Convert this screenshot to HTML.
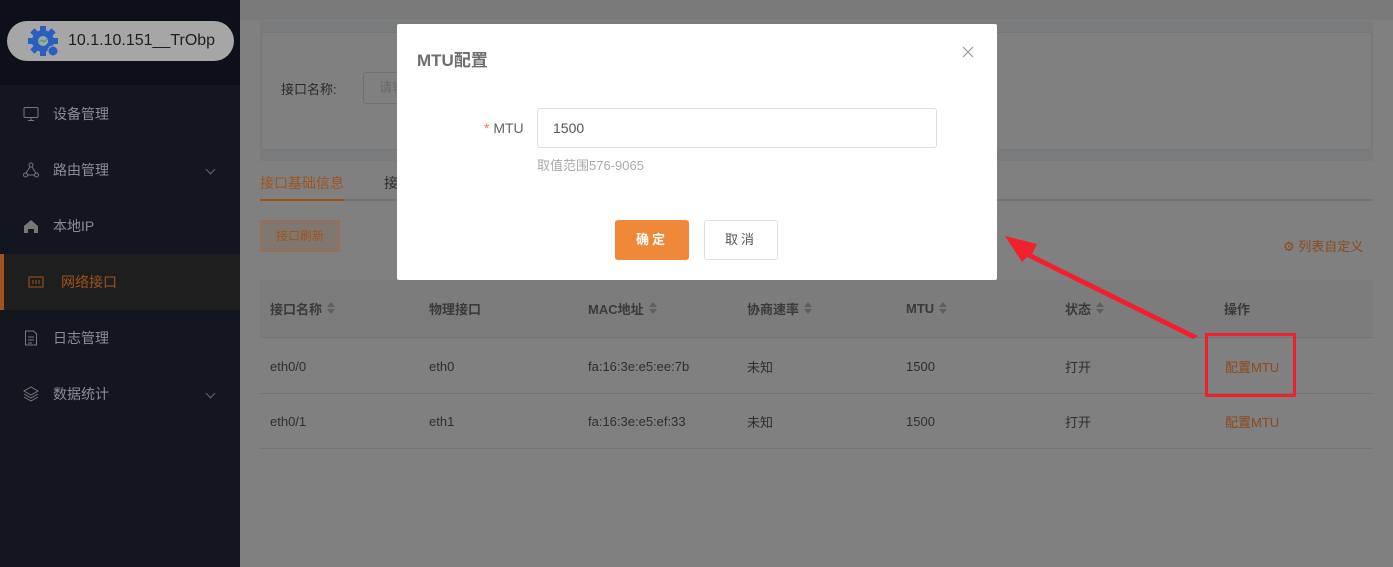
<!DOCTYPE html>
<html><head><meta charset="utf-8">
<style>
*{box-sizing:border-box;margin:0;padding:0}
body{width:1393px;height:567px;overflow:hidden;position:relative;background:#808080;font-family:"Liberation Sans","Noto Sans CJK SC",sans-serif;font-size:14px;color:#2a2a2a}
.abs{position:absolute}
.side{left:0;top:0;width:240px;height:567px;background:#12161f}
.top{left:0;top:0;width:240px;height:85px;background:#0d1018}
.pill{left:7px;top:21px;width:227px;height:40px;border-radius:20px;background:#a6a6a6;color:#1e1e1e;font-size:16px;line-height:40px;padding-left:61px}
.mi{left:0;width:240px;height:56px;line-height:56px;color:#8a8d93;font-size:14px;padding-left:53px}
.mi svg{position:absolute;left:23px;top:20px}
.act{background:#1e1e1e;color:#a0521c;border-left:4px solid #a0521c;padding-left:53px}
.chev{position:absolute;left:207px;top:24px;width:7px;height:7px;border-right:1px solid #666;border-bottom:1px solid #666;transform:rotate(45deg)}
.th{font-weight:bold;color:#3a3a3a;font-size:13px;height:20px;display:flex;align-items:center;white-space:nowrap}
.sort{display:inline-block;margin-left:5px;width:8px;height:12px;position:relative}
.sort:before{content:"";position:absolute;top:0;left:0;border:4px solid transparent;border-bottom:5px solid #5e5e5e;border-top:0}
.sort:after{content:"";position:absolute;bottom:0;left:0;border:4px solid transparent;border-top:5px solid #5e5e5e;border-bottom:0}
.td{font-size:13px;color:#2e2e2e;height:20px;display:flex;align-items:center;white-space:nowrap}
.or{color:#8a4a1c}
.modal{left:397px;top:24px;width:600px;height:256px;background:#fff;border-radius:2px}
</style></head><body>
<div class="abs side"></div>
<div class="abs top"></div>
<div class="abs pill">10.1.10.151__TrObp</div>
<svg class="abs" style="left:28px;top:26px" width="32" height="32" viewBox="0 0 32 32">
<g fill="#2a5fc0"><circle cx="15" cy="15" r="11"/>
<g transform="translate(15 15)"><rect x="-3" y="-15" width="6" height="7"/><rect x="-3" y="8" width="6" height="7"/><rect x="-15" y="-3" width="7" height="6"/><rect x="8" y="-3" width="7" height="6"/>
<rect x="-3" y="-15" width="6" height="7" transform="rotate(45)"/><rect x="-3" y="-15" width="6" height="7" transform="rotate(135)"/><rect x="-3" y="-15" width="6" height="7" transform="rotate(225)"/><rect x="-3" y="-15" width="6" height="7" transform="rotate(315)"/></g></g>
<circle cx="15" cy="15" r="5" fill="#a6a6a6"/><path d="M11 16l3-2 2 2 3-3" stroke="#2a6" fill="none"/>
<circle cx="25" cy="25" r="5" fill="#2a5fc0" stroke="#a6a6a6"/></svg>

<div class="abs mi" style="top:86px"><svg width="16" height="16" viewBox="0 0 16 16" fill="none" stroke="#777"><rect x="1" y="1.5" width="14" height="10" rx="1"/><path d="M5 14.5h6M8 11.5v3"/></svg>设备管理</div>
<div class="abs mi" style="top:142px"><svg width="16" height="16" viewBox="0 0 16 16" fill="none" stroke="#777"><circle cx="8" cy="3" r="2"/><circle cx="2.5" cy="13" r="2"/><circle cx="13.5" cy="13" r="2"/><path d="M7 5l-4 6M9 5l4 6M4.5 13h7"/></svg>路由管理<span class="chev"></span></div>
<div class="abs mi" style="top:198px"><svg width="16" height="16" viewBox="0 0 16 16"><path d="M1 8L8 2l7 6v7h-4v-4H5v4H1z" fill="#777"/></svg>本地IP</div>
<div class="abs mi act" style="top:254px;height:56px"><svg style="left:24px" width="16" height="16" viewBox="0 0 16 16" fill="none" stroke="#a0521c"><rect x="1" y="3" width="14" height="10"/><path d="M5 6v4M8 6v4M11 6v4"/></svg><span style="padding-left:4px">网络接口</span></div>
<div class="abs mi" style="top:310px"><svg width="16" height="16" viewBox="0 0 16 16" fill="none" stroke="#777"><path d="M2.5 1h8l3 3v11h-11z M5 7h6M5 10h6M5 13h4"/></svg>日志管理</div>
<div class="abs mi" style="top:366px"><svg width="16" height="16" viewBox="0 0 16 16" fill="none" stroke="#777"><path d="M8 1l7 4-7 4-7-4z M1 8l7 4 7-4 M1 11l7 4 7-4"/></svg>数据统计<span class="chev"></span></div>

<!-- main -->
<div class="abs" style="left:240px;top:0;width:1153px;height:20px;background:#7a7a7a"></div>
<div class="abs" style="left:260px;top:21px;width:1113px;height:140px;background:#7a7b7d"></div>
<div class="abs" style="left:261px;top:32px;width:1111px;height:118px;background:#808080;border:1px solid #777;border-radius:3px"></div>
<div class="abs" style="left:281px;top:79px;color:#2a2a2a;font-size:13px">接口名称:</div>
<div class="abs" style="left:363px;top:72px;width:50px;height:32px;border:1px solid #707070;border-radius:3px;color:#6a6a6a;font-size:13px;padding:0 15px;line-height:30px;white-space:nowrap;overflow:hidden">请输入</div>
<div class="abs" style="left:260px;top:173px;color:#a0521c;font-size:14px">接口基础信息</div>
<div class="abs" style="left:384px;top:173px;color:#2a2a2a;font-size:14px">接口</div>
<div class="abs" style="left:260px;top:199px;width:1113px;height:2px;background:#717276"></div>
<div class="abs" style="left:260px;top:199px;width:84px;height:2px;background:#a0521c"></div>
<div class="abs" style="left:260px;top:220px;width:80px;height:32px;border:1px solid #a86a40;border-radius:2px;background:#807870;color:#a0521c;font-size:12px;line-height:30px;text-align:center">接口刷新</div>
<div class="abs or" style="left:1283px;top:236px;font-size:13px">⚙ 列表自定义</div>

<div class="abs" style="left:260px;top:280px;width:1113px;height:58px;background:#7c7c7c;border-bottom:1px solid #747474"></div>
<div class="abs" style="left:260px;top:393px;width:1113px;height:1px;background:#747474"></div>
<div class="abs" style="left:260px;top:448px;width:1113px;height:1px;background:#747474"></div>
<div class="abs th" style="left:270px;top:298px">接口名称<i class="sort"></i></div>
<div class="abs th" style="left:429px;top:298px">物理接口</div>
<div class="abs th" style="left:588px;top:298px">MAC地址<i class="sort"></i></div>
<div class="abs th" style="left:747px;top:298px">协商速率<i class="sort"></i></div>
<div class="abs th" style="left:906px;top:298px">MTU<i class="sort"></i></div>
<div class="abs th" style="left:1065px;top:298px">状态<i class="sort"></i></div>
<div class="abs th" style="left:1224px;top:298px">操作</div>

<div class="abs td" style="left:270px;top:356px">eth0/0</div>
<div class="abs td" style="left:429px;top:356px">eth0</div>
<div class="abs td" style="left:588px;top:356px">fa:16:3e:e5:ee:7b</div>
<div class="abs td" style="left:747px;top:356px">未知</div>
<div class="abs td" style="left:906px;top:356px">1500</div>
<div class="abs td" style="left:1065px;top:356px">打开</div>
<div class="abs td or" style="left:1225px;top:356px">配置MTU</div>
<div class="abs td" style="left:270px;top:411px">eth0/1</div>
<div class="abs td" style="left:429px;top:411px">eth1</div>
<div class="abs td" style="left:588px;top:411px">fa:16:3e:e5:ef:33</div>
<div class="abs td" style="left:747px;top:411px">未知</div>
<div class="abs td" style="left:906px;top:411px">1500</div>
<div class="abs td" style="left:1065px;top:411px">打开</div>
<div class="abs td or" style="left:1225px;top:411px">配置MTU</div>

<!-- modal -->
<div class="abs modal"></div>
<div class="abs" style="left:417px;top:46px;font-size:17px;font-weight:bold;color:#6e6e6e">MTU配置</div>
<svg class="abs" style="left:962px;top:46px" width="12" height="12" viewBox="0 0 12 12"><path d="M1 1l10 10M11 1L1 11" stroke="#999" stroke-width="1.2"/></svg>
<div class="abs" style="left:484px;top:120px;font-size:14px;color:#606266"><span style="color:#f56c6c">*</span> MTU</div>
<div class="abs" style="left:537px;top:108px;width:400px;height:40px;border:1px solid #dcdfe6;border-radius:3px;padding:0 15px;line-height:38px;font-size:14px;color:#555">1500</div>
<div class="abs" style="left:537px;top:155px;font-size:13px;color:#aaa">取值范围576-9065</div>
<div class="abs" style="left:615px;top:220px;width:74px;height:40px;background:#f0883a;border-radius:3px;color:#fff;font-size:13px;font-weight:bold;text-align:center;line-height:40px;letter-spacing:3px">确定</div>
<div class="abs" style="left:704px;top:220px;width:74px;height:40px;border:1px solid #dcdfe6;border-radius:3px;color:#555;font-size:13px;text-align:center;line-height:38px;letter-spacing:3px">取消</div>

<!-- annotations -->
<div class="abs" style="left:1205px;top:333px;width:91px;height:64px;border:3px solid #f0202e"></div>
<svg class="abs" style="left:0;top:0" width="1393" height="567"><path d="M1198 336L1032 254L1037 244L1005 236L1022 262L1027 257L1193 339Z" fill="#f0202e"/></svg>
</body></html>
